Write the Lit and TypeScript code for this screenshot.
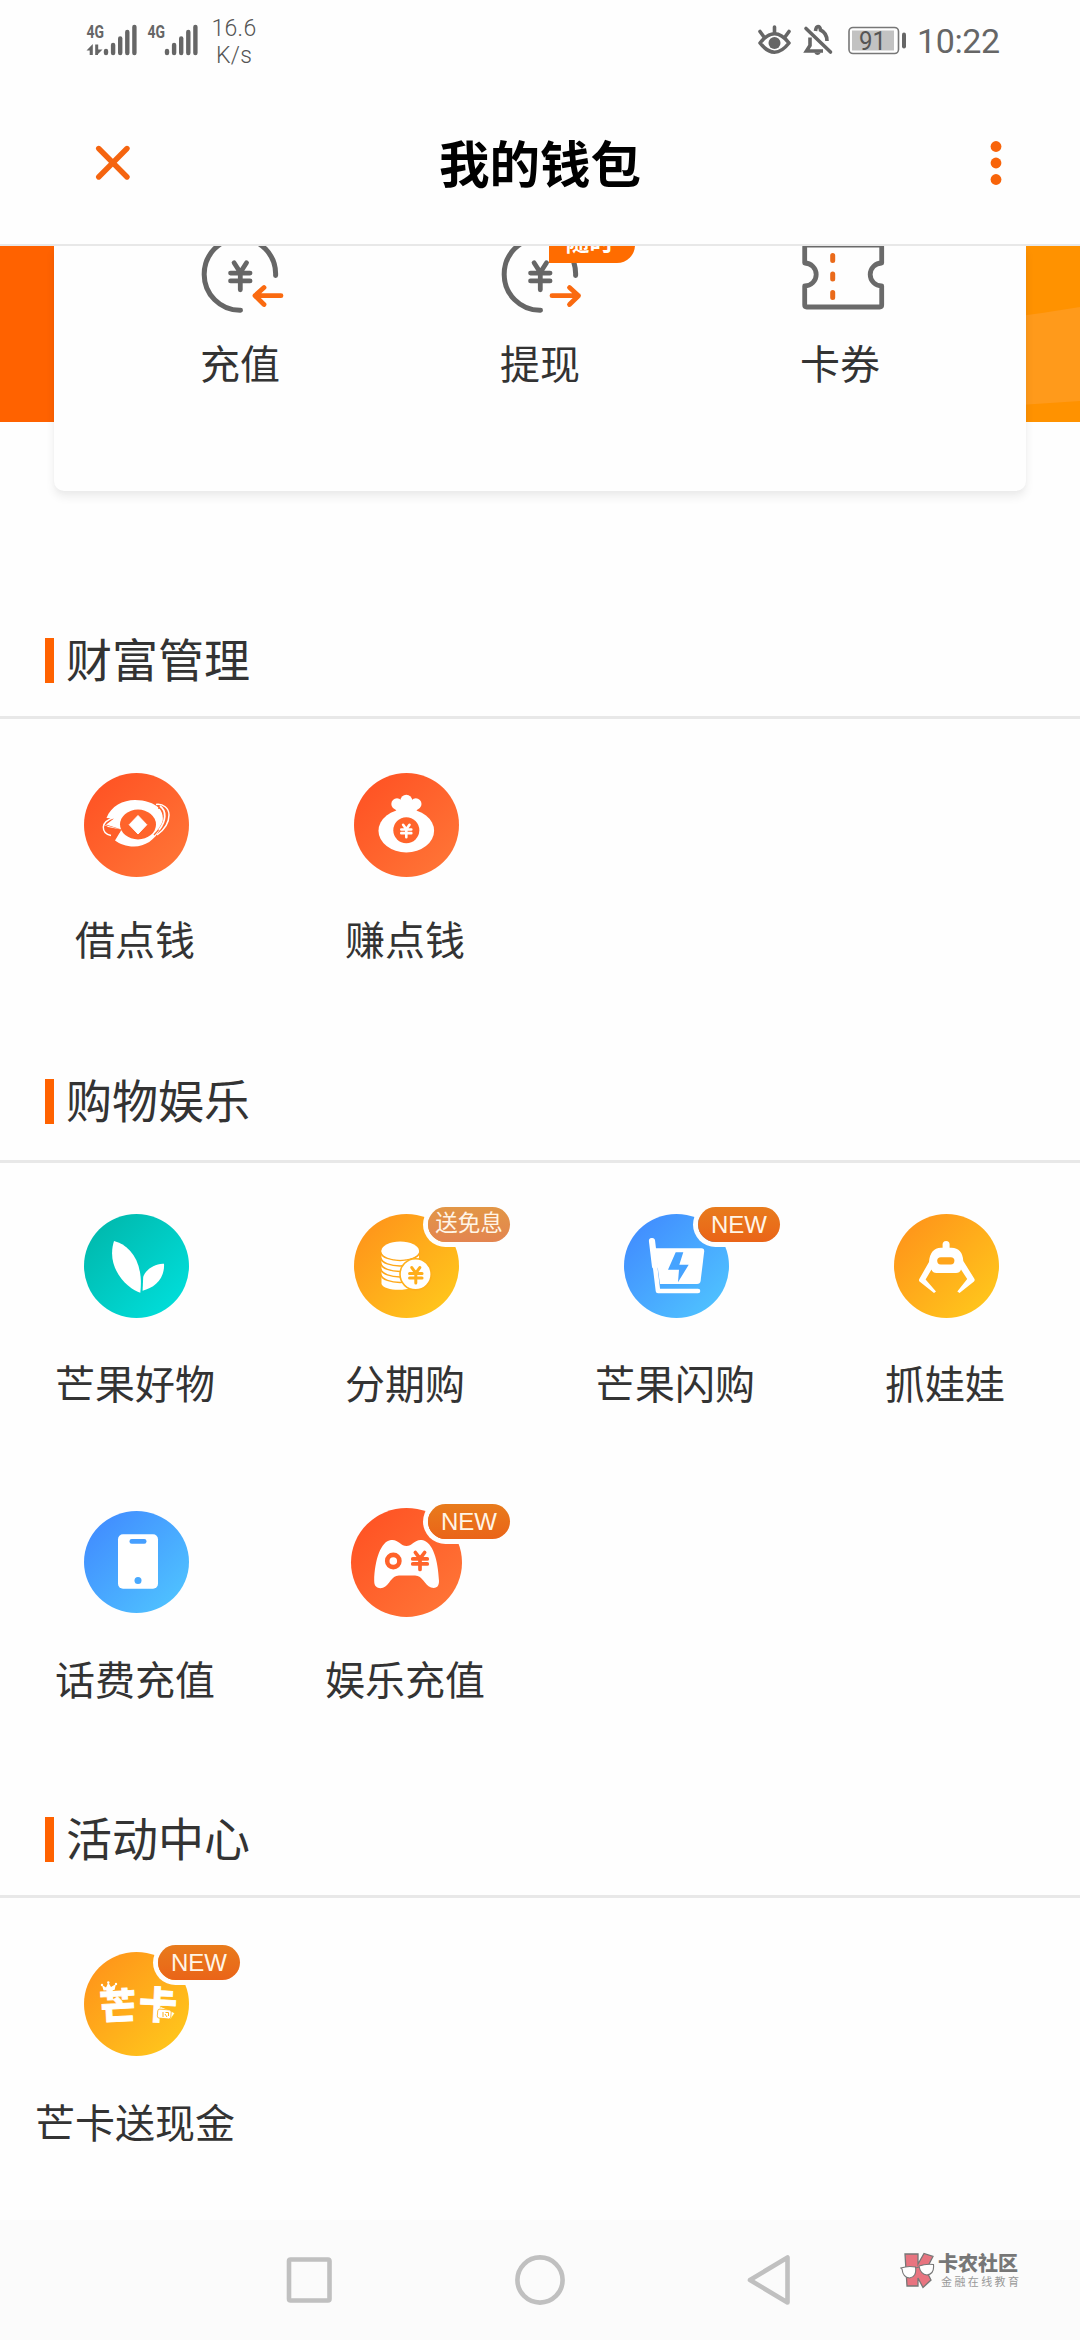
import { LitElement, html, svg, css } from "lit";
import { customElement, property } from "lit/decorators.js";
import { classMap } from "lit/directives/class-map.js";

const yen = (cx: number, cy: number, w: number, h: number, sw: number, color: string) => svg`
  <path fill="none" stroke=${color} stroke-width=${sw} stroke-linecap="round" stroke-linejoin="round"
    d="M${cx - w * 0.32} ${cy - h / 2} L${cx} ${cy - h * 0.14} L${cx + w * 0.32} ${cy - h / 2}
       M${cx - w / 2} ${cy - h * 0.12} H${cx + w / 2} M${cx - w / 2} ${cy + h * 0.17} H${cx + w / 2}
       M${cx} ${cy - h * 0.12} V${cy + h / 2}"/>`;

const glyphs: Record<string, unknown> = {
  borrow: svg`
    <path fill="#fff" d="M22.5 45 C27 33 39 27 51 27 C61 27 70 30 75 35 C80 41 80 49 76 56 C71 67 61 73.5 50 73.5
      C42 73.5 36 71 31 67.5 L37 57.5 L21 52.5 L30 45.5 Z"/>
    <path d="M22 51.5 L37.5 56.5 L30.5 66 L21 58 Z" fill="#ff5f2a"/>
    <path d="M21 52 L37 56.5 L24 54 Z" fill="#fff"/>
    <path d="M31 44 C25 46 19.5 49 19.3 54 C19.2 58 22 61.5 27 62.5" fill="none" stroke="#fff" stroke-width="1.4"/>
    <ellipse cx="54" cy="51.5" rx="18" ry="15" fill="#ff642b"/>
    <path d="M54 42.5 L62.8 51.7 L54 61 L45.2 51.7 Z" fill="#fff" stroke="#fff" stroke-width="1" stroke-linejoin="round"/>
    <path d="M72 31.5 C79 30.5 85 35 85 42 C85 50 80 57 73 62" fill="none" stroke="#fff" stroke-width="1.5"/>
    <path d="M74 35 C81 35 83 41 80 47 C78 52 75 57 70 62" fill="none" stroke="#ff6c30" stroke-width="1.3"/>
    <path d="M76 33 C83 38 82 48 75 57" fill="none" stroke="#fff" stroke-width="1.8"/>`,
  bag: svg`
    <ellipse cx="52.3" cy="57.8" rx="27.8" ry="21.6" fill="#fff"/>
    <circle cx="52.3" cy="27.8" r="6" fill="#fff"/><circle cx="43" cy="31" r="5.7" fill="#fff"/>
    <circle cx="61.8" cy="31" r="5.7" fill="#fff"/>
    <path d="M40 34 L43 39 Q42 41 38 42.5 H66.6 Q62.5 41 61.7 39 L65 34 L52 26 Z" fill="#fff"/>
    <circle cx="52.3" cy="57.2" r="13" fill="#ff642b"/>
    ${yen(52.3, 58, 10, 12.5, 2.6, "#fff")}`,
  leaf: svg`
    <path fill="#fff" d="M30 27 C46 31 60 48 56.3 78.7 C46 76 21 56 30 27 Z"/>
    <path fill="#fff" d="M80 49.7 C71 49 61 56 59.2 63 L58.6 76.7 C70 74 81 65 80 49.7 Z"/>`,
  coins: svg`
    <path fill="#fff" d="M27.5 36.5 H65 V68 C62 78 30 78 27.5 70 Z"/>
    <g fill="none" stroke="#ffa81a" stroke-width="1.5">
      <path d="M26.8 38.5 C29 49 63 49 65.7 38.5"/><path d="M26.8 44 C29 54.5 63 54.5 65.7 44"/>
      <path d="M26.8 49.5 C29 60 63 60 65.7 49.5"/><path d="M26.8 55 C29 65.5 63 65.5 65.7 55"/>
      <path d="M26.8 60.5 C29 71 63 71 65.7 60.5"/></g>
    <ellipse cx="46.2" cy="36.5" rx="18.7" ry="9" fill="#fff"/>
    <circle cx="61.6" cy="60.3" r="15.6" fill="#fff" stroke="#ffb01a" stroke-width="1.6"/>
    ${yen(61.8, 61.3, 12.5, 15.5, 3, "#ffae1a")}`,
  cart: svg`
    <path d="M28 27.2 L34 77 H74" fill="none" stroke="#fff" stroke-width="4.6" stroke-linecap="round" stroke-linejoin="round"/>
    <path d="M28 27 L31 52" stroke="#fff" stroke-width="6.2" stroke-linecap="round"/>
    <path fill="#fff" d="M31 34.3 H77.5 Q80.5 34.3 80.2 37.5 L76.6 67 Q76.2 70 73 70 H36 Z"/>
    <path fill="#46a3ff" d="M51.7 38.3 H59.3 L55.3 50.7 H64.7 L54 68.3 L55 55.7 H44 Z"/>`,
  claw: svg`
    <rect x="48.6" y="27" width="7" height="14" rx="3.5" fill="#fff"/>
    <path fill="#fff" d="M47 33.7 H57.5 Q68.5 34 69.3 47 L80.5 65 Q81 66.5 80 67.6 L65.5 79 L63.3 77.6 L73.2 65
      L67 55.5 Q66 59 62 59 H42.5 Q38.5 59 37.5 55.5 L31.6 65.5 L42 77.6 L40 79 L25.5 67.6 Q24.6 66.4 25.3 65 L35 48 Q36 34 47 33.7 Z"/>
    <rect x="43.2" y="43.2" width="17.2" height="7.2" rx="3.6" fill="#ffa51a"/>`,
  phone: svg`
    <rect x="34" y="24.3" width="40" height="54.4" rx="5" fill="#fff"/>
    <rect x="45.5" y="29" width="17" height="4.8" rx="2.2" fill="#469fff"/>
    <circle cx="54" cy="70.6" r="3.5" fill="#48a9ff"/>`,
  pad: svg`
    <path fill="#fff" d="M40 32 C47 31 50 38 55.5 38 C61 38 64 31 71 32 C82 34 87 52 88 73 C88 80 84 80.5 80 79.5
      C73 77 72 67.5 64 67.5 H48 C40 67.5 39 77 32 79.8 C28 80.8 23.2 80 23.2 73 C23.5 52 30 33 40 32 Z"/>
    <circle cx="42.3" cy="53" r="6.1" fill="none" stroke="#ff622a" stroke-width="4.6"/>
    ${yen(69, 53, 14.5, 17, 3.7, "#ff652b")}`,
  mango: svg`
    <text class="logo-text" x="15.5" y="68" font-size="37" stroke="#fff" stroke-width=".8" transform="rotate(-3 36 54)">芒</text>
    <text class="logo-text" x="55" y="67" font-size="38" stroke="#fff" stroke-width=".8" transform="rotate(3 74 52)">卡</text>
    <path fill="#fff" d="M19.5 38.5 L18 33 L22 35.5 L24.3 30.5 L27 35 L32 32 L30.5 38 Z"/>
    <circle cx="18" cy="33" r="1.2" fill="#fff"/><circle cx="24.3" cy="30.5" r="1.2" fill="#fff"/><circle cx="32" cy="32" r="1.2" fill="#fff"/>
    <rect x="73.5" y="57.5" width="13.5" height="9" rx="2" fill="#fff" stroke="#ffb01a" stroke-width=".8" transform="rotate(5 80 62)"/>
    <path d="M79 60 V65 M81.5 60.5 H84.5 V64 M81 62 L83 65" stroke="#ffb01a" stroke-width="1" fill="none"/>`,
};

interface Tile { label: string; icon: string; tone: string; badge?: string; pale?: boolean; big?: boolean; }
interface Section { title: string; kind: string; tiles: Tile[]; }

const sections: Section[] = [
  { title: "财富管理", kind: "wealth", tiles: [
    { label: "借点钱", icon: "borrow", tone: "red" },
    { label: "赚点钱", icon: "bag", tone: "red" },
  ] },
  { title: "购物娱乐", kind: "shop", tiles: [
    { label: "芒果好物", icon: "leaf", tone: "teal" },
    { label: "分期购", icon: "coins", tone: "amber", badge: "送免息", pale: true },
    { label: "芒果闪购", icon: "cart", tone: "blue", badge: "NEW" },
    { label: "抓娃娃", icon: "claw", tone: "amber" },
    { label: "话费充值", icon: "phone", tone: "blue" },
    { label: "娱乐充值", icon: "pad", tone: "red", badge: "NEW", big: true },
  ] },
  { title: "活动中心", kind: "events", tiles: [
    { label: "芒卡送现金", icon: "mango", tone: "amber", badge: "NEW" },
  ] },
];

@customElement("app-tile")
class AppTile extends LitElement {
  @property({ attribute: false }) tile!: Tile;
  static styles = css`
    :host { display: flex; flex-direction: column; align-items: center; }
    .icon { position: relative; left: 1.5px; width: 105px; height: 104px; display: flex; align-items: center; justify-content: center; }
    .disc { flex: none; width: 105px; height: 104px; border-radius: 50%; }
    .disc.big { width: 111px; height: 109px; }
    .disc.short { height: 102px; }
    .red { background: linear-gradient(135deg, #ff5525 15%, #ff7436 90%); }
    .teal { background: linear-gradient(135deg, #00bbb0 15%, #00deda 90%); }
    .amber { background: linear-gradient(135deg, #ff981a 15%, #ffc61c 90%); }
    .blue { background: linear-gradient(135deg, #4290ff 15%, #4fc2ff 90%); }
    svg { display: block; width: 100%; height: 100%; }
    .logo-text { font-family: "Noto Sans CJK SC", sans-serif; font-weight: 900; fill: #fff; }
    .badge { position: absolute; left: 74px; top: -7px; width: 82px; height: 35px; border-radius: 18px; box-shadow: 0 0 0 5px #fefefe;
      background: linear-gradient(#e87b1c, #ea6418); color: #fff5e6; text-align: center;
      font: 24px/36px "Liberation Sans", "Noto Sans CJK SC", sans-serif; white-space: nowrap; }
    .badge.pale { background: linear-gradient(#e29646, #e38550); font-size: 22.5px; line-height: 34px; }
    .badge.low { top: -6px; }
    .label { position: relative; top: -2px; margin-top: var(--label-gap); height: 40px; line-height: 40px; font-size: 40px; color: #333; white-space: nowrap; }
  `;
  render() {
    const t = this.tile;
    return html`
      <div class="icon">
        <div class=${classMap({ disc: true, [t.tone]: true, big: !!t.big, short: t.icon === "phone" })}>
          <svg viewBox=${t.big ? "0 0 111 109" : t.icon === "phone" ? "0 1 105 102" : "0 0 105 104"}>${glyphs[t.icon]}</svg>
        </div>
        ${t.badge ? html`<span class=${classMap({ badge: true, pale: !!t.pale, low: !!t.big })}>${t.badge}</span>` : null}
      </div>
      <div class="label">${t.label}</div>`;
  }
}

@customElement("app-root")
class AppRoot extends LitElement {
  static styles = css`
    :host { display: flex; flex-direction: column; width: 1080px; height: 2340px; overflow: hidden; background: #fefefe;
      font-family: "Noto Sans CJK SC", sans-serif; color: #333; }
    .status { height: 82px; box-sizing: border-box; display: flex; align-items: flex-start; padding: 0 79px 0 86px; color: #666; font-family: Roboto, sans-serif; }
    .signal { width: 114px; height: 60px; flex: none; }
    .speed { width: 68px; margin-top: 15px; font-size: 23px; line-height: 27px; text-align: center; font-weight: 300; color: #555; letter-spacing: .3px; }
    .spacer { flex: 1; }
    .indicators { width: 152px; height: 60px; flex: none; margin-right: 9px; }
    .clock { width: 84px; margin-top: 21px; font-size: 34px; line-height: 40px; letter-spacing: -.4px; }
    .four-g { font: 700 18px Roboto, sans-serif; fill: #666; }
    .level { font: 25px Roboto, sans-serif; fill: #555; }
    .bar { height: 162px; display: grid; grid-template-columns: 1fr auto 1fr; align-items: center; padding: 0 76px 0 94px; border-bottom: 2px solid #e8e8e8; }
    .bar svg { display: block; }
    .bar .menu { justify-self: end; }
    .bar h1 { margin: 0; font-size: 50.5px; line-height: 60px; font-weight: 700; color: #000; position: relative; left: -9px; top: -2px; }
    .wallet { position: relative; height: 245px; flex: none; padding: 0 54px; clip-path: inset(0 0 -30px 0); }
    .banner { position: absolute; left: 0; top: 0; width: 1080px; height: 176px; }
    .card { position: relative; height: 245px; display: grid; grid-template-columns: repeat(3, 300px); padding: 0 36px; background: #fefefe;
      border-radius: 0 0 10px 10px; box-shadow: 0 6px 10px rgba(0, 0, 0, .07), 0 2px 5px rgba(0, 0, 0, .02); }
    .action { position: relative; display: flex; flex-direction: column; align-items: center; }
    .action svg { display: block; width: 100px; height: 76px; overflow: hidden; }
    .action span { margin-top: 20px; font-size: 40px; line-height: 40px; }
    .action .tag { position: absolute; left: 159px; top: -18px; margin: 0; width: 86px; height: 35px; border-radius: 0 0 18px 0; background: #ff6c00;
      color: #fff; font-size: 24px; line-height: 25px; text-align: center; text-indent: -5px; }
    .wealth { margin-top: 147px; --label-gap: 43px; --line-gap: 33px; --row-gap: 54px; }
    .shop { margin-top: 119px; --label-gap: 46px; --line-gap: 36px; --row-gap: 51px; }
    .events { margin-top: 118px; --label-gap: 46.5px; --line-gap: 33px; --row-gap: 54px; }
    .head { display: flex; align-items: center; gap: 12px; height: 45px; padding: 0 45px var(--line-gap); border-bottom: 3px solid #e8e8e8; }
    .head i { width: 9px; height: 45px; background: #ff6200; }
    .head h2 { margin: 0; font-size: 46px; line-height: 45px; font-weight: 400; position: relative; top: -3px; }
    .tiles { display: grid; grid-template-columns: repeat(4, 270px); row-gap: 106px; padding-top: var(--row-gap); }
    .shop .tiles { margin-bottom: -1px; }
    .nav { margin-top: auto; height: 120px; flex: none; display: flex; align-items: center; background: #fbfbfb; }
    .keys { width: 512px; height: 60px; margin-left: 284px; }
    .brand { display: flex; align-items: flex-start; gap: 3px; margin: -20px 0 0 104px; color: #777; }
    .brand svg { width: 35px; height: 37px; margin-top: 1px; }
    .brand strong { display: block; margin-top: 1px; font-size: 20px; line-height: 21px; font-weight: 900; }
    .brand small { display: block; margin: 2px 0 0 3px; font-size: 11px; line-height: 13px; letter-spacing: 2.4px; color: #999; white-space: nowrap; }
  `;

  private signalBars(x: number) {
    const tops = [51, 45, 38.5, 32, 27];
    return tops.map((t, i) => svg`<path d="M${x + i * 7.1} ${t} V53" stroke="#666" stroke-width="4.4" stroke-linecap="round"/>`);
  }

  private coinRing(out: boolean) {
    return svg`
      <path d="M85.6 29.5 A35.8 35.8 0 0 0 49.5 -7.8 A35.8 35.8 0 0 0 14.2 28 A35.8 35.8 0 0 0 50.5 64.3" fill="none" stroke="#666" stroke-width="5" stroke-linecap="round"/>
      ${yen(50.3, 30.3, 19.5, 27, 4.8, "#666")}
      <path fill="none" stroke="#fa6a10" stroke-width="4.8" stroke-linecap="round" stroke-linejoin="round"
        d=${out ? "M62 49.7 H88.5 M79.5 41.5 L88.5 49.7 L79.5 58.5" : "M91 49.7 H65 M74 41.5 L65 49.7 L74 58.5"}/>`;
  }

  render() {
    return html`
      <div class="status">
        <svg class="signal" viewBox="86 0 114 60">
          <text class="four-g" x="86.5" y="38" textLength="17.5" lengthAdjust="spacingAndGlyphs">4G</text>
          <text class="four-g" x="147.5" y="38" textLength="17.5" lengthAdjust="spacingAndGlyphs">4G</text>
          <path d="M86.5 50.5 L92.8 44 V55 H89.7 V50.5 Z M95.2 44.5 H98.2 V49.5 H102.5 L98 54 V55 H95.2 Z" fill="#666"/>
          ${this.signalBars(106)}${this.signalBars(167)}
        </svg>
        <div class="speed">16.6<br>K/s</div>
        <div class="spacer"></div>
        <svg class="indicators" viewBox="755 0 152 60">
          <g fill="none" stroke="#666" stroke-width="3.6" stroke-linecap="round">
            <path d="M759 43 Q773.5 24.5 788 43 Q773.5 61.5 759 43 Z" stroke-linejoin="round"/>
            <path d="M759 31.5 L763 37 M773.5 27 V33 M788 31.5 L784 37"/>
            <path d="M805 28.5 L829.5 52"/>
            <path d="M809 37.5 V45.5 L805.5 51 H822 M814.5 31 Q815 26.5 817 26.5 Q819 26.5 819.5 30 Q826 33 826 41" stroke-linecap="butt"/>
          </g>
          <circle cx="773.5" cy="43" r="6" fill="#666"/>
          <path d="M813 52.5 H820 Q816.5 57.5 813 52.5 Z" fill="#666"/>
          <rect x="848" y="27.5" width="49.5" height="26" rx="4" fill="none" stroke="#777" stroke-width="1.6"/>
          <rect x="851" y="30.5" width="42" height="20" fill="#c2c2c2"/>
          <path d="M903 34.5 V46.5" stroke="#666" stroke-width="4" stroke-linecap="round"/>
          <text class="level" x="858" y="49.5" textLength="27" lengthAdjust="spacingAndGlyphs">91</text>
        </svg>
        <div class="clock">10:22</div>
      </div>
      <div class="bar">
        <svg width="38" height="38" viewBox="0 0 38 38"><path d="M4.7 4.5 L33 33 M33 4.5 L4.7 33" stroke="#f5640f" stroke-width="5.4" stroke-linecap="round"/></svg>
        <h1>我的钱包</h1>
        <svg class="menu" width="16" height="50" viewBox="0 0 16 50"><g fill="#f8640a"><circle cx="8" cy="8.5" r="5.4"/><circle cx="8" cy="25" r="5.4"/><circle cx="8" cy="41.5" r="5.4"/></g></svg>
      </div>
      <div class="wallet">
        <svg class="banner" viewBox="0 0 1080 176">
          <rect width="540" height="176" fill="#ff6200"/><rect x="540" width="540" height="176" fill="#ff9200"/>
          <path d="M1020 70 L1042 67 L1080 61 V155 L1020 159 Z" fill="#ff9a1b"/>
        </svg>
        <div class="card">
          <div class="action"><svg viewBox="0 0 100 76">${this.coinRing(false)}</svg><span>充值</span></div>
          <div class="action"><svg viewBox="0 0 100 76">${this.coinRing(true)}</svg><b class="tag">随时</b><span>提现</span></div>
          <div class="action">
            <svg viewBox="0 0 100 76">
              <path d="M17 -.8 H90 Q91.7 -.8 91.7 1 V17 A11.5 11.5 0 0 0 91.7 40 V59 Q91.7 61 89.7 61 H16.7 Q14.7 61 14.7 59 V40 A11.5 11.5 0 0 0 14.7 17 V1 Q14.7 -.8 17 -.8 Z"
                fill="none" stroke="#6a6a6a" stroke-width="4.8" stroke-linejoin="round"/>
              <path d="M42.7 9.5 V14.5 M42.7 28 V33 M42.7 46.5 V51.5" stroke="#ea6a1a" stroke-width="5" stroke-linecap="round"/>
            </svg><span>卡券</span>
          </div>
        </div>
      </div>
      ${sections.map((s) => html`
        <section class=${s.kind}>
          <div class="head"><i></i><h2>${s.title}</h2></div>
          <div class="tiles">${s.tiles.map((t) => html`<app-tile .tile=${t}></app-tile>`)}</div>
        </section>`)}
      <div class="nav">
        <svg class="keys" viewBox="284 2250 512 60">
          <g fill="none" stroke="#c0c0c0" stroke-width="4.6" stroke-linejoin="round">
            <rect x="289" y="2259.5" width="40.5" height="41" rx="1.5"/>
            <circle cx="540" cy="2280" r="22.6"/>
            <path d="M787.5 2257.5 V2302.5 L750 2280 Z"/>
          </g>
        </svg>
        <div class="brand">
          <svg viewBox="0 0 35 37">
            <path d="M5 2 H18 V12 L24 1.5 L33 4.5 L26 18 L31 28 L23 35.5 L18 26 V34 H7 Z" fill="#e87480" stroke="#777" stroke-width="1.3"/>
            <path d="M.8 16 Q8 13.5 15.5 15 Q17 25 9.5 26 Q3 25.5 2 17 Z M19 14 Q26 11.5 33.5 12.5 Q34.5 22 27 23 Q20.5 22.5 19 14 Z M15.5 16 L19 15" fill="#fff" stroke="#777" stroke-width="1.1"/>
          </svg>
          <div><strong>卡农社区</strong><small>金融在线教育</small></div>
        </div>
      </div>`;
  }
}
